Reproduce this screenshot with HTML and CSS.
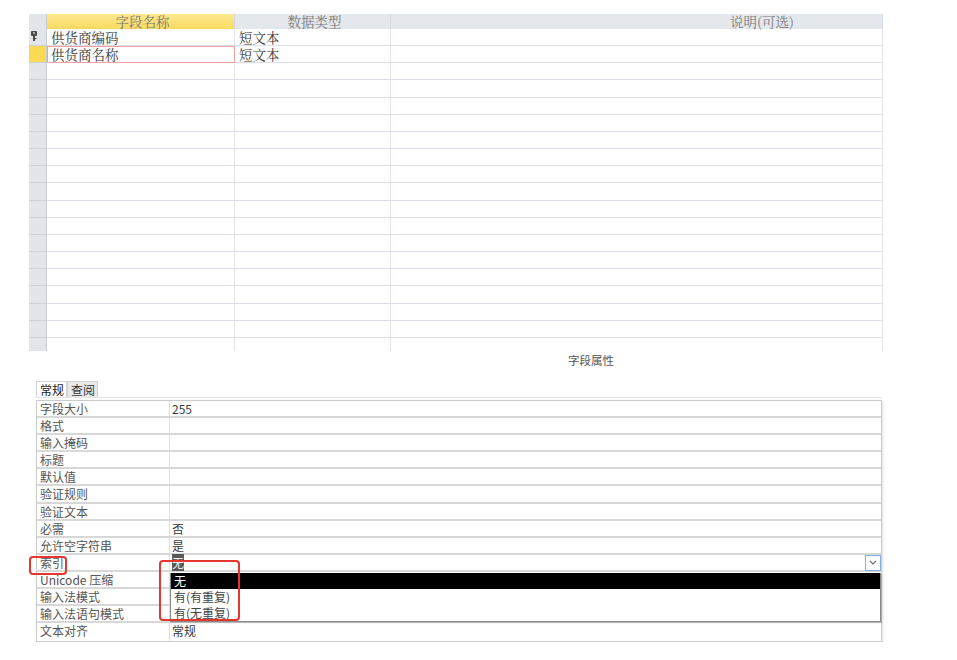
FILE: index.html
```html
<!DOCTYPE html>
<html lang="zh-CN">
<head>
    <meta charset="utf-8">
    <title>表设计 - 供货商</title>
    <link rel="stylesheet" href="styles.css">
</head>
<body>
    <div class="page">
        <!-- field list -->
        <div class="design-grid">
            <div class="grow head">
                <div class="sel corner"></div>
                <div class="cell hl">字段名称</div>
                <div class="cell">数据类型</div>
                <div class="cell desc">说明(可选)</div>
            </div>
            <div class="grow">
                <div class="sel">
                    <svg class="key" width="6" height="10" viewBox="0 0 6 10">
                        <path d="M1 0h4a1 1 0 0 1 1 1v3a1 1 0 0 1-1 1h-1v5h-2v-5h-1a1 1 0 0 1-1-1v-3a1 1 0 0 1 1-1z" fill="#4a4a4a"/>
                        <rect x="2" y="1.3" width="2" height="1.4" fill="#cfd3d9"/>
                        <rect x="4" y="7" width="1.5" height="1" fill="#4a4a4a"/>
                    </svg>
                </div>
                <div class="cell">供货商编码</div>
                <div class="cell">短文本</div>
                <div class="cell"></div>
            </div>
            <div class="grow current">
                <div class="sel"></div>
                <div class="cell editing">供货商名称</div>
                <div class="cell">短文本</div>
                <div class="cell"></div>
            </div>
            <div class="grow"><div class="sel"></div><div class="cell"></div><div class="cell"></div><div class="cell"></div></div>
            <div class="grow"><div class="sel"></div><div class="cell"></div><div class="cell"></div><div class="cell"></div></div>
            <div class="grow"><div class="sel"></div><div class="cell"></div><div class="cell"></div><div class="cell"></div></div>
            <div class="grow"><div class="sel"></div><div class="cell"></div><div class="cell"></div><div class="cell"></div></div>
            <div class="grow"><div class="sel"></div><div class="cell"></div><div class="cell"></div><div class="cell"></div></div>
            <div class="grow"><div class="sel"></div><div class="cell"></div><div class="cell"></div><div class="cell"></div></div>
            <div class="grow"><div class="sel"></div><div class="cell"></div><div class="cell"></div><div class="cell"></div></div>
            <div class="grow"><div class="sel"></div><div class="cell"></div><div class="cell"></div><div class="cell"></div></div>
            <div class="grow"><div class="sel"></div><div class="cell"></div><div class="cell"></div><div class="cell"></div></div>
            <div class="grow"><div class="sel"></div><div class="cell"></div><div class="cell"></div><div class="cell"></div></div>
            <div class="grow"><div class="sel"></div><div class="cell"></div><div class="cell"></div><div class="cell"></div></div>
            <div class="grow"><div class="sel"></div><div class="cell"></div><div class="cell"></div><div class="cell"></div></div>
            <div class="grow"><div class="sel"></div><div class="cell"></div><div class="cell"></div><div class="cell"></div></div>
            <div class="grow"><div class="sel"></div><div class="cell"></div><div class="cell"></div><div class="cell"></div></div>
            <div class="grow"><div class="sel"></div><div class="cell"></div><div class="cell"></div><div class="cell"></div></div>
            <div class="grow"><div class="sel"></div><div class="cell"></div><div class="cell"></div><div class="cell"></div></div>
            <div class="grow last"><div class="sel"></div><div class="cell"></div><div class="cell"></div><div class="cell"></div></div>
        </div>

        <div class="section-title">字段属性</div>

        <!-- field properties -->
        <div class="props">
            <div class="tabs">
                <span class="tab active">常规</span>
                <span class="tab">查阅</span>
            </div>
            <div class="ptable">
                <div class="prow"><div class="plabel">字段大小</div><div class="pval">255</div></div>
                <div class="prow"><div class="plabel">格式</div><div class="pval"></div></div>
                <div class="prow"><div class="plabel">输入掩码</div><div class="pval"></div></div>
                <div class="prow"><div class="plabel">标题</div><div class="pval"></div></div>
                <div class="prow"><div class="plabel">默认值</div><div class="pval"></div></div>
                <div class="prow"><div class="plabel">验证规则</div><div class="pval"></div></div>
                <div class="prow"><div class="plabel">验证文本</div><div class="pval"></div></div>
                <div class="prow"><div class="plabel">必需</div><div class="pval">否</div></div>
                <div class="prow"><div class="plabel">允许空字符串</div><div class="pval">是</div></div>
                <div class="prow">
                    <div class="plabel">索引</div>
                    <div class="pval open">
                        <span class="picked">无</span>
                        <span class="drop-btn">
                            <svg width="8" height="5" viewBox="0 0 8 5"><path d="M1 1l3 3 3-3" fill="none" stroke="#777" stroke-width="1.2"/></svg>
                        </span>
                        <div class="drop-list">
                            <div class="drop-item on">无</div>
                            <div class="drop-item">有(有重复)</div>
                            <div class="drop-item">有(无重复)</div>
                        </div>
                    </div>
                </div>
                <div class="prow"><div class="plabel">Unicode 压缩</div><div class="pval"></div></div>
                <div class="prow"><div class="plabel">输入法模式</div><div class="pval"></div></div>
                <div class="prow"><div class="plabel">输入法语句模式</div><div class="pval"></div></div>
                <div class="prow"><div class="plabel">文本对齐</div><div class="pval">常规</div></div>
            </div>

            <div class="mark mark-label"></div>
            <div class="mark mark-list"></div>
        </div>
    </div>
</body>
</html>
```

FILE: styles.css
```css
* {
    box-sizing: border-box;
}
body {
    margin: 0;
    background-color: #ffffff;
    color: #333333;
    font-family: "Noto Sans CJK SC", "Noto Sans", sans-serif;
}
.page {
    width: 854px;
    padding: 14px 0 0 0;
    margin-left: 29px;
}

/* top grid */
.design-grid {
    font-family: "Noto Serif CJK SC", "Noto Sans CJK SC", serif;
    font-size: 13.5px;
}
.grow {
    display: grid;
    grid-template-columns: 18px 188px 156px 492px;
    height: 17.17px;
}
.grow.head {
    height: 15px;
    background-color: #e4e7ec;
}
.grow.last {
    height: 13px;
}
.cell {
    border-right: 1px solid #e2e4ed;
    border-bottom: 1px solid #dcdfe9;
    padding-left: 4px;
    line-height: 16px;
    white-space: nowrap;
    color: #3a3a3a;
}
.last .cell {
    border-bottom: none;
}
.head .cell {
    text-align: center;
    color: #7a7a7a;
    line-height: 15px;
    border-bottom: none;
    border-right-color: #d6d9e0;
}
.head .hl {
    background: linear-gradient(#fde98f, #f9da60);
}
.head .desc {
    text-align: left;
    padding-left: 339px;
}
.sel {
    background-color: #e2e5ea;
    border-bottom: 1px solid #cdd1d8;
    border-right: 1px solid #c7cbd2;
}
.sel.corner {
    border-bottom: none;
}
.last .sel {
    border-bottom: none;
}
.current .sel {
    background-color: #fbd955;
}
.key {
    display: block;
    margin: 2px 0 0 2px;
}
.editing {
    outline: 1px solid #f2a0a0;
    outline-offset: -1px;
}

/* properties */
.section-title {
    font-size: 11.5px;
    line-height: 16px;
    color: #555555;
    padding-left: 539px;
    margin: 1px 0 13px 0;
}
.props {
    position: relative;
}
.tabs {
    display: flex;
    margin-left: 7px;
    width: 846px;
    height: 17px;
    border-bottom: 1px solid #e4e4e4;
    font-size: 12px;
}
.tab {
    line-height: 15px;
    padding: 0 2px 0 3px;
    border: 1px solid #d3d3d3;
    border-bottom: none;
    background-color: #e9e9e9;
    color: #333333;
}
.tab.active {
    background-color: #ffffff;
    color: #222222;
}
.ptable {
    margin: 2px 0 0 7px;
    width: 846px;
    border: 1px solid #cbcbcb;
    box-shadow: 1px 1px 2px rgba(0, 0, 0, 0.12);
    font-size: 12px;
}
.prow {
    display: grid;
    grid-template-columns: 132px 1fr;
    height: 17.14px;
    border-bottom: 2px solid #d8d8d8;
}
.prow:last-child {
    border-bottom: none;
}
.plabel {
    padding-left: 3px;
    line-height: 15px;
    color: #555555;
    white-space: nowrap;
}
.pval {
    border-left: 1px solid #e0e0e0;
    padding-left: 2px;
    line-height: 15px;
    color: #3a3a3a;
}
.pval.open {
    position: relative;
}
.picked {
    background-color: #5a5a5a;
    color: #f0f0f0;
}
.drop-btn {
    position: absolute;
    right: 0;
    top: 0;
    width: 16px;
    height: 16px;
    border: 1px solid #86b1de;
    background-color: #ffffff;
    display: flex;
    align-items: center;
    justify-content: center;
}
.drop-list {
    position: absolute;
    left: 0;
    right: 0;
    top: 18px;
    height: 49px;
    border: 1px solid #8a8a8a;
    border-top: none;
    background-color: #ffffff;
    box-shadow: 1px 1px 1px rgba(0, 0, 0, 0.15);
    z-index: 2;
}
.drop-item {
    height: 16px;
    line-height: 16px;
    padding-left: 3px;
    color: #444444;
}
.drop-item.on {
    background-color: #000000;
    color: #ffffff;
}

/* red highlight boxes */
.mark {
    position: absolute;
    border: 2px solid #e5372d;
    border-radius: 4px;
    z-index: 3;
}
.mark-label {
    left: 0;
    top: 175px;
    width: 38px;
    height: 19px;
}
.mark-list {
    left: 130px;
    top: 179px;
    width: 81px;
    height: 61px;
}
```
